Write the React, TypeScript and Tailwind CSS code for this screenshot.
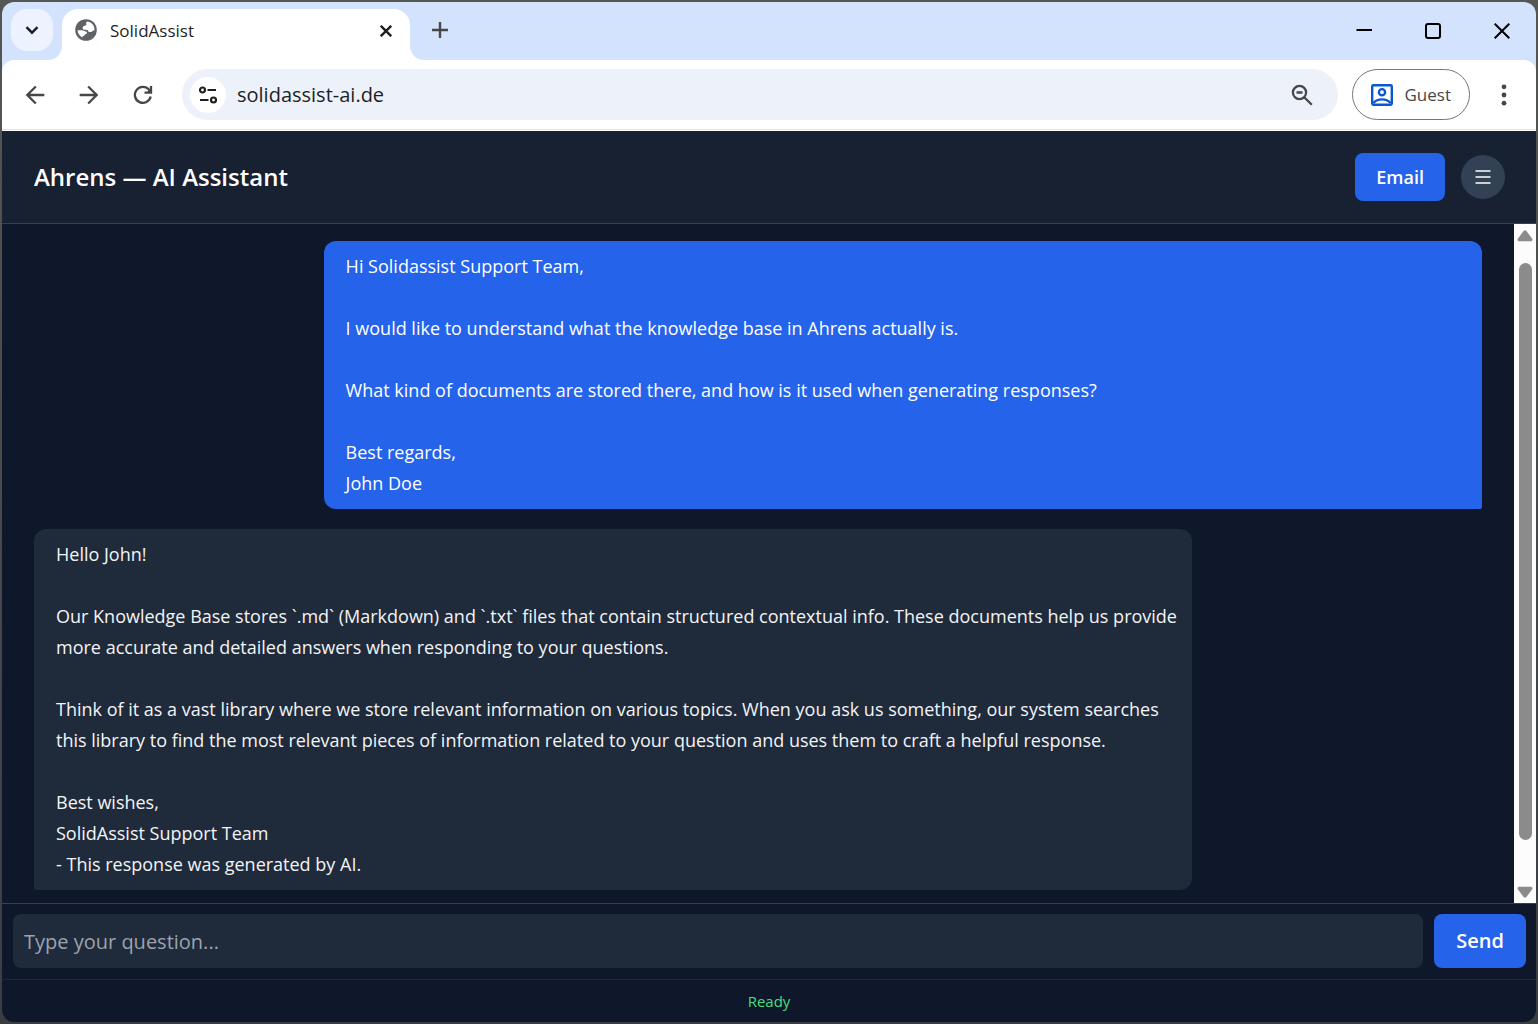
import { useState } from "react";
import type { ReactNode } from "react";
import { MdArrowBack, MdArrowForward } from "react-icons/md";

const messages = [
  {
    from: "user",
    text: `Hi Solidassist Support Team,

I would like to understand what the knowledge base in Ahrens actually is.

What kind of documents are stored there, and how is it used when generating responses?

Best regards,
John Doe`,
  },
  {
    from: "assistant",
    text: `Hello John!

Our Knowledge Base stores \`.md\` (Markdown) and \`.txt\` files that contain structured contextual info. These documents help us provide more accurate and detailed answers when responding to your questions.

Think of it as a vast library where we store relevant information on various topics. When you ask us something, our system searches this library to find the most relevant pieces of information related to your question and uses them to craft a helpful response.

Best wishes,
SolidAssist Support Team
- This response was generated by AI.`,
  },
];

const IconButton = ({ label, className = "", children }: { label: string; className?: string; children: ReactNode }) => (
  <button type="button" aria-label={label} className={`flex shrink-0 items-center justify-center ${className}`}>
    {children}
  </button>
);

// the concave corner where the tab meets the toolbar
const TabFoot = ({ flip = false }) => (
  <svg viewBox="0 0 14 14" className={`size-3.5 self-end fill-white ${flip ? "-scale-x-100" : ""}`} aria-hidden="true">
    <path d="M14 0V14H0A14 14 0 0 0 14 0Z" />
  </svg>
);

const Globe = () => (
  <svg viewBox="0 0 22 22" className="size-[22px] shrink-0" aria-hidden="true">
    <circle cx="11" cy="11" r="10.8" fill="#5f6368" />
    <path
      d="M12.500 2.600c-1.600.6-1.700 1.900-1 2.800-.2 1.300-3.900 1-3.900 3.500 0 1.400 1.200 1.900 2.700 1.800 2-.1 3.200.8 3.300 2.200h2.300c1.200 0 1.500-1.500 3.600-1.700C19.700 7 17 3.400 12.500 2.600Z"
      fill="#fff"
    />
    <path
      d="M2.600 11.300h4.300c1.800 0 3.300 1.300 5 1.600.3 1.700-.8 2.200-2.100 2.400-.1 1.400-.9 1.900-2.200 1.900v1.300C4.700 17.200 2.700 14.600 2.600 11.300Z"
      fill="#fff"
    />
  </svg>
);

const TabBar = () => (
  <div className="flex h-[58px] items-start bg-[#d3e3fd]">
    <IconButton label="Search tabs" className="mt-[7px] ml-[9px] size-[42px] rounded-2xl bg-[#ecf2fe] text-[#1f1f1f]">
      <svg viewBox="0 0 14 14" className="size-3.5 fill-none stroke-current" strokeWidth="2.400" aria-hidden="true">
        <path d="M1.500 4.200 7 9.700l5.500-5.500" />
      </svg>
    </IconButton>
    <div className="-ml-[5px] flex h-full">
      <TabFoot />
      <div className="mt-[7px] flex w-[348px] items-start rounded-t-2xl bg-white pt-2.5 pr-3 pl-[13px]">
        <Globe />
        <span className="ml-[13px] flex-1 text-[17px] leading-6 text-[#1f1f1f]">SolidAssist</span>
        <IconButton label="Close tab" className="size-6 text-[#1f1f1f]">
          <svg viewBox="0 0 12 12" className="size-3 stroke-current" strokeWidth="2.400" aria-hidden="true">
            <path d="m.8.8 10.400 10.400M11.200.8.8 11.200" />
          </svg>
        </IconButton>
      </div>
      <TabFoot flip />
    </div>
    <IconButton label="New tab" className="mt-2 -ml-1 size-10 text-[#474747]">
      <svg viewBox="0 0 16 16" className="size-4 stroke-current" strokeWidth="2.400" aria-hidden="true">
        <path d="M8 0v16M0 8h16" />
      </svg>
    </IconButton>
    <div className="ml-auto flex h-full text-black">
      <IconButton label="Minimize" className="w-[69px]">
        <svg viewBox="0 0 16 16" className="size-4 stroke-current" strokeWidth="2" aria-hidden="true">
          <path d="M.5 7H16" />
        </svg>
      </IconButton>
      <IconButton label="Maximize" className="w-[69px]">
        <svg viewBox="0 0 16 16" className="size-4 fill-none stroke-current" strokeWidth="2" aria-hidden="true">
          <rect x="1" y="1" width="14" height="14" rx="2" />
        </svg>
      </IconButton>
      <IconButton label="Close" className="w-[69px]">
        <svg viewBox="0 0 16 16" className="size-4 stroke-current" strokeWidth="2" aria-hidden="true">
          <path d="m.7.7 14.600 14.600M15.300.7.7 15.300" />
        </svg>
      </IconButton>
    </div>
  </div>
);

const Toolbar = () => (
  <div className="border-b border-white bg-[#d3e3fd]">
    <div className="flex h-[70px] items-center rounded-t-xl border-b border-[#e0e2e5] bg-white pr-3.5">
      <div className="flex pl-1.5 text-[#474747]">
        <IconButton label="Back" className="size-[54px]">
          <MdArrowBack className="size-7" />
        </IconButton>
        <IconButton label="Forward" className="size-[54px]">
          <MdArrowForward className="size-7" />
        </IconButton>
        <IconButton label="Reload" className="size-[54px]">
          <svg viewBox="0 0 20 20" className="size-5 fill-none stroke-current" strokeWidth="2.300" aria-hidden="true">
            <path d="M17.700 11.600A8 8 0 1 1 15.900 4.600L18 6.800" />
            <path d="M18 1v6.700h-6.500" />
            <path d="M18 3v4.700h-4.600Z" className="fill-current" stroke="none" />
          </svg>
        </IconButton>
      </div>
      <div className="ml-3 flex h-[51px] flex-1 items-center rounded-full bg-[#ecf1fa] pr-[22px] pl-2">
        <IconButton label="Site information" className="size-9 rounded-full bg-white text-[#1f1f1f]">
          <svg viewBox="0 0 20 18" className="h-[18px] w-5 fill-none stroke-current" strokeWidth="2.200" aria-hidden="true">
            <circle cx="4.500" cy="4" r="2.500" />
            <path d="M9.500 4H18M2 14h8.500" />
            <circle cx="15.500" cy="14" r="2.500" />
          </svg>
        </IconButton>
        <input
          type="text"
          aria-label="Address"
          defaultValue="solidassist-ai.de"
          className="ml-[11px] min-w-0 flex-1 bg-transparent text-xl text-[#1f1f1f] outline-none"
        />
        <IconButton label="Zoom" className="size-7 text-[#474747]">
          <svg viewBox="0 0 22 22" className="size-[22px] fill-none stroke-current" strokeWidth="2.300" aria-hidden="true">
            <circle cx="8.500" cy="8.500" r="6.600" />
            <path d="M5.500 8.500h6M13.200 13.200l7.600 7.600" />
          </svg>
        </IconButton>
      </div>
      <button
        type="button"
        className="ml-3.5 flex h-[51px] items-center gap-3 rounded-full border border-[#747775] px-[18px] text-[17px] text-[#474747]"
      >
        <svg viewBox="0 0 22 22" className="size-[22px] fill-none stroke-[#0b57d0]" strokeWidth="2.400" aria-hidden="true">
          <rect x="1.200" y="1.200" width="19.600" height="19.600" rx="1.200" />
          <circle cx="11" cy="8.200" r="3.100" />
          <path d="M2.500 19c2-2.300 5-3.600 8.500-3.600s6.500 1.300 8.500 3.600" />
        </svg>
        Guest
      </button>
      <IconButton label="Menu" className="ml-4 size-9 text-[#474747]">
        <svg viewBox="0 0 6 22" className="h-[22px] w-1.5 fill-current" aria-hidden="true">
          <circle cx="3" cy="2.800" r="2.400" />
          <circle cx="3" cy="11" r="2.400" />
          <circle cx="3" cy="19.200" r="2.400" />
        </svg>
      </IconButton>
    </div>
  </div>
);

const Scrollbar = () => (
  <div className="flex w-[22px] shrink-0 flex-col items-center bg-[#fcfcfc] pt-1.5 pb-[5px]" aria-hidden="true">
    <svg viewBox="0 0 16 12" className="h-3 w-4 fill-[#8b8b8b]">
      <path d="M6.600 1a2 2 0 0 1 2.800 0l5.600 7.500c.9 1.200.3 2.800-1 2.800H2c-1.300 0-1.900-1.600-1-2.800Z" />
    </svg>
    <div className="mt-[21px] mb-[46px] w-[13px] flex-1 rounded-full bg-[#8b8b8b]" />
    <svg viewBox="0 0 16 12" className="h-3 w-4 rotate-180 fill-[#8b8b8b]">
      <path d="M6.600 1a2 2 0 0 1 2.800 0l5.600 7.500c.9 1.200.3 2.800-1 2.800H2c-1.300 0-1.900-1.600-1-2.800Z" />
    </svg>
  </div>
);

const App = () => {
  const [question, setQuestion] = useState("");

  return (
    <div className="h-screen bg-linear-to-b from-[#555753] to-[#3a3d42] p-0.5 font-['Open_Sans','Noto_Sans',sans-serif]">
      <div className="flex h-full flex-col overflow-hidden rounded-xl bg-[#0f172a]">
        <TabBar />
        <Toolbar />
        <header className="flex h-[93px] shrink-0 items-center border-b border-[#334155] bg-[#172132] pr-[31px] pl-8">
          <h1 className="flex-1 text-2xl font-semibold text-white">Ahrens — AI Assistant</h1>
          <button type="button" className="h-12 rounded-lg bg-[#2563eb] px-[21px] text-lg font-semibold text-white">
            Email
          </button>
          <IconButton label="Open menu" className="ml-4 size-11 rounded-full bg-[#334155] text-white">
            <svg viewBox="0 0 16 16" className="size-4 stroke-current" strokeWidth="1.700" aria-hidden="true">
              <path d="M.5 2h15M.5 8h15M.5 14h15" />
            </svg>
          </IconButton>
        </header>

        <div className="flex min-h-0 flex-1">
          <main className="flex min-w-0 flex-1 flex-col gap-5 overflow-hidden px-8 pt-[17px]">
            {messages.map((message) => (
              <div
                key={message.from}
                className={`w-4/5 shrink-0 rounded-xl py-2.5 pr-1.5 pl-[22px] text-lg leading-[31px] whitespace-pre-wrap ${
                  message.from === "user"
                    ? "self-end rounded-br-xs bg-[#2563eb] text-white"
                    : "rounded-bl-xs bg-[#1f2a3b] text-gray-100"
                }`}
              >
                {message.text}
              </div>
            ))}
          </main>
          <Scrollbar />
        </div>

        <form
          onSubmit={(e) => e.preventDefault()}
          className="flex h-[76px] shrink-0 items-start gap-[11px] border-t border-[#334155] pt-2.5 pr-2.5 pl-[11px]"
        >
          <input
            type="text"
            aria-label="Question"
            placeholder="Type your question..."
            value={question}
            onChange={(e) => setQuestion(e.target.value)}
            className="h-[54px] min-w-0 flex-1 rounded-lg bg-[#1f2a3b] px-[11px] text-xl text-white outline-none placeholder:text-[#9ca3af]"
          />
          <button type="submit" className="h-[54px] rounded-lg bg-[#2563eb] px-[22px] text-xl font-semibold text-white">
            Send
          </button>
        </form>
        <footer className="flex h-[43px] shrink-0 items-center justify-center border-t border-[#1e293b] text-[15px] text-[#4ade80]">
          Ready
        </footer>
      </div>
    </div>
  );
};

export default App;
